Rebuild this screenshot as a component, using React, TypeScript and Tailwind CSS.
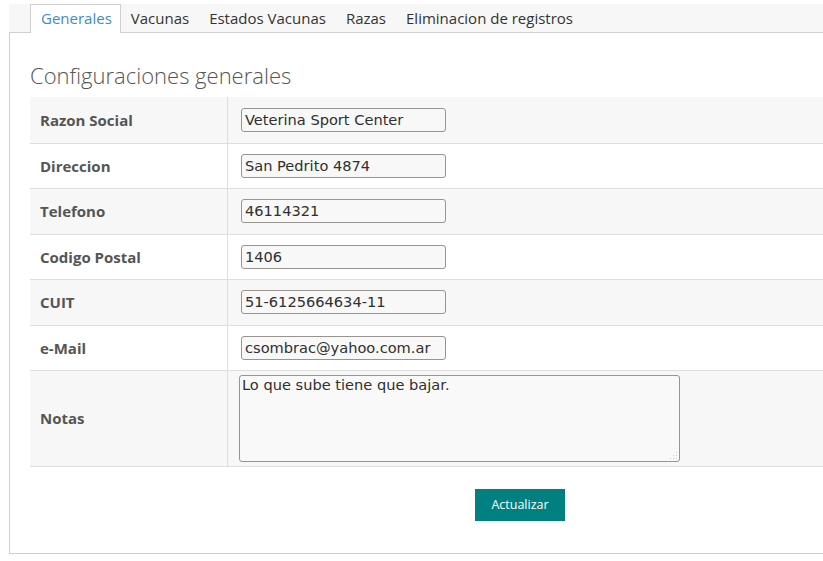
import React from "react";

const rows: { label: string; value: string }[] = [
  { label: "Razon Social", value: "Veterina Sport Center" },
  { label: "Direccion", value: "San Pedrito 4874" },
  { label: "Telefono", value: "46114321" },
  { label: "Codigo Postal", value: "1406" },
  { label: "CUIT", value: "51-6125664634-11" },
  { label: "e-Mail", value: "csombrac@yahoo.com.ar" },
];

const tabs = ["Generales", "Vacunas", "Estados Vacunas", "Razas", "Eliminacion de registros"];

export default function App() {
  return (
    <div
      className="w-[823px] h-[561px] overflow-hidden bg-white pt-[4px] pl-[9px]"
      style={{ fontFamily: "'Open Sans', 'Liberation Sans', sans-serif" }}
    >
      <div className="w-[1100px]">
        {/* Tab bar */}
        <div className="flex h-[29px] bg-[#f7f7f7] border-b border-[#cfcfcf] pl-[21px]">
          {tabs.map((t, i) => (
            <div
              key={t}
              className={
                i === 0
                  ? "h-[29px] pl-[10px] pr-[8px] border border-b-0 border-[#cfcfcf] bg-white text-[#3b8ad6] text-[15px] leading-[27px]"
                  : "h-[29px] px-[9px] border border-transparent text-[#333] text-[15px] leading-[27px]"
              }
            >
              {t}
            </div>
          ))}
        </div>

        {/* Panel */}
        <div className="h-[521px] border-l border-b border-[#cfcfcf] bg-white pl-[20px] pt-[27px]">
          <h2 className="text-[22px] leading-[30px] font-light text-[#555]">Configuraciones generales</h2>

          <div className="mt-[7px] text-[15px]">
            {rows.map((r, i) => (
              <div
                key={r.label}
                className={
                  (i % 2 === 0 ? "bg-[#f7f7f7] " : "bg-white ") +
                  (i === 0 ? "" : "border-t border-[#dedede] ") +
                  "flex h-[45.5px]"
                }
              >
                <div className="w-[198px] border-r border-[#dedede] flex items-center pl-[10px] font-bold text-[#555]">
                  {r.label}
                </div>
                <div className="flex items-center pl-[13px]">
                  <div
                    className="w-[205px] h-[24px] rounded-[3px] border border-[#98948f] bg-[#f8f8f8] pl-[3px] flex items-center text-[14.6px] text-[#2f2f2f]"
                    style={{ fontFamily: "'DejaVu Sans', sans-serif" }}
                  >
                    {r.value}
                  </div>
                </div>
              </div>
            ))}
            <div className="flex h-[97px] bg-[#f7f7f7] border-t border-b border-[#dedede]">
              <div className="w-[198px] border-r border-[#dedede] flex items-center pl-[10px] font-bold text-[#555]">
                Notas
              </div>
              <div className="flex items-center pl-[11px]">
                <div
                  className="relative w-[441px] h-[87px] rounded-[3px] border border-[#98948f] bg-[#f9f9f9] pl-[2px] pt-0 text-[14.6px] text-[#2f2f2f] leading-[18px]"
                  style={{ fontFamily: "'DejaVu Sans', sans-serif" }}
                >
                  Lo que sube tiene que bajar.
                  <svg className="absolute right-[1px] bottom-[1px]" width="9" height="9" viewBox="0 0 9 9">
                    <g fill="#c8c8c8">
                      <rect x="7" y="1" width="1" height="1" />
                      <rect x="4" y="4" width="1" height="1" />
                      <rect x="7" y="4" width="1" height="1" />
                      <rect x="1" y="7" width="1" height="1" />
                      <rect x="4" y="7" width="1" height="1" />
                      <rect x="7" y="7" width="1" height="1" />
                    </g>
                  </svg>
                </div>
              </div>
            </div>
          </div>

          <div className="mt-[22px] ml-[445px] w-[90px] h-[32px] bg-[#008080] text-white text-[12.5px] flex items-center justify-center">
            Actualizar
          </div>
        </div>
      </div>
    </div>
  );
}
